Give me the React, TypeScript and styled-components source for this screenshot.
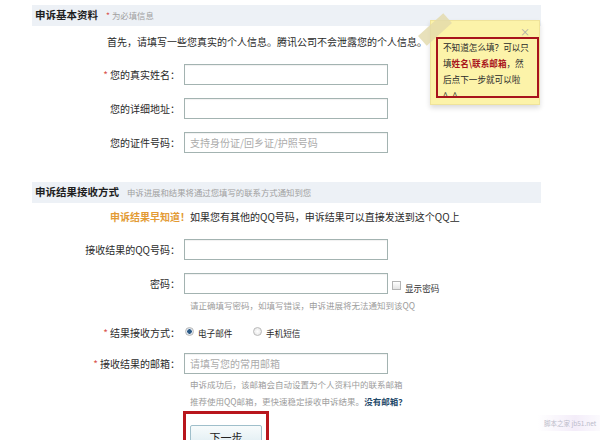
import React from "react";
import styled, { createGlobalStyle } from "styled-components";

const Global = createGlobalStyle`
  html, body { margin: 0; padding: 0; background: #fff; }
  body { font-family: "Noto Sans CJK SC", "Noto Sans", sans-serif; color: #2a2a2a; }
  * { box-sizing: border-box; }
`;

const Page = styled.div`
  position: relative;
  width: 600px;
  height: 440px;
  overflow: hidden;
  padding: 5px 0 0 32px;
`;

const Section = styled.section<{ $mt?: number }>`
  width: 509px;
  margin-top: ${(p) => p.$mt ?? 0}px;
`;

const SectionHeader = styled.div`
  height: 21px;
  background: #edf1f6;
  display: flex;
  align-items: center;
  gap: 8px;
  padding-left: 3px;
`;

const HeaderTitle = styled.h2`
  margin: 0;
  font-size: 10.5px;
  font-weight: 700;
  color: #1e1e1e;
  line-height: 1;
`;

const HeaderNote = styled.span`
  font-size: 8.4px;
  color: #a0a0a0;
  line-height: 1;
`;

const Star = styled.span`
  color: #d9534f;
  margin-right: 2px;
`;

const Intro = styled.p<{ $mt: number; $ml: number }>`
  margin: ${(p) => p.$mt}px 0 0 ${(p) => p.$ml}px;
  font-size: 10px;
  line-height: 16px;
  white-space: nowrap;
`;

const Highlight = styled.strong`
  color: #e39b35;
  font-weight: 700;
`;

const FieldRow = styled.div<{ $mt: number }>`
  display: grid;
  grid-template-columns: 148px 204px auto;
  column-gap: 4px;
  align-items: center;
  margin-top: ${(p) => p.$mt}px;
  height: 21px;
`;

const Label = styled.label`
  text-align: right;
  font-size: 10px;
  line-height: 21px;
  white-space: nowrap;
`;

const TextInput = styled.input`
  width: 204px;
  height: 21px;
  border: 1px solid #a3b3b1;
  box-shadow: inset 0 1px 1px rgba(0, 0, 0, 0.06);
  padding: 0 5px;
  font-family: "Noto Sans CJK SC", "Noto Sans", sans-serif;
  font-size: 10px;
  outline: none;
  &::placeholder { color: #ababab; }
`;

const Hint = styled.div<{ $mt: number; $lh: number }>`
  margin: ${(p) => p.$mt}px 0 0 158px;
  font-size: 8.5px;
  line-height: ${(p) => p.$lh}px;
  color: #9c9c9c;
  white-space: nowrap;
`;

const HintLink = styled.a`
  color: #1f4a6a;
  font-weight: 700;
  text-decoration: none;
`;

const CheckWrap = styled.div`
  display: flex;
  align-items: center;
  gap: 4px;
  margin-top: 9px;
`;

const CheckBox = styled.span`
  width: 9px;
  height: 9px;
  border: 1px solid #b4b4b4;
  background: linear-gradient(#ffffff, #e4e4e4);
  margin-top: -5px;
`;

const SmallText = styled.span`
  font-size: 8.6px;
  color: #333;
`;

const RadioGroup = styled.div`
  display: flex;
  align-items: center;
  padding-left: 1px;
`;

const RadioOption = styled.span<{ $w?: number }>`
  display: flex;
  align-items: center;
  gap: 4px;
  width: ${(p) => (p.$w ? `${p.$w}px` : "auto")};
  font-size: 8.6px;
`;

const RadioDot = styled.span<{ $on?: boolean }>`
  width: 9px;
  height: 9px;
  border-radius: 50%;
  border: 1px solid #b9b9b9;
  background: ${(p) =>
    p.$on
      ? "radial-gradient(circle, #2c5a86 0 2px, #dfe6ee 2.5px)"
      : "radial-gradient(circle, #ffffff, #e2e2e2)"};
  margin-top: -3px;
`;

const ButtonFrame = styled.div`
  margin: 1px 0 0 151px;
  width: 86px;
  height: 40px;
  border: 3px solid #b8161d;
  padding: 9px 4px 0 4px;
`;

const NextButton = styled.button`
  width: 72px;
  height: 24px;
  border: 1px solid #9fbfcb;
  border-radius: 2px;
  background: linear-gradient(#f7fbfc, #dcebf1);
  font-family: "Noto Sans CJK SC", "Noto Sans", sans-serif;
  font-size: 11px;
  color: #222;
  padding: 0;
`;

const Note = styled.aside`
  position: absolute;
  left: 430px;
  top: 20px;
  width: 110px;
  height: 85px;
  background: #fcf3a9;
  border: 1px solid #efe39a;
  box-shadow: 0 3px 5px rgba(0, 0, 0, 0.14);
  padding: 16px 0 0 5px;
`;

const Tape = styled.span`
  position: absolute;
  left: -13px;
  top: 2px;
  width: 34px;
  height: 13px;
  background: rgba(226, 218, 170, 0.8);
  transform: rotate(-42deg);
`;

const Close = styled.span`
  position: absolute;
  right: 9px;
  top: 5px;
  font-size: 10px;
  line-height: 12px;
  color: #a8a8a8;
`;

const NoteBox = styled.div`
  width: 103px;
  height: 61px;
  border: 2px solid #a8141c;
  overflow: hidden;
  padding-left: 5px;
  font-size: 8.6px;
  line-height: 16px;
  color: #2a2a2a;
`;

const NoteStrong = styled.strong`
  color: #a8141c;
  font-weight: 700;
`;

const Watermark = styled.div`
  position: absolute;
  right: 0;
  top: 415px;
  width: 62px;
  height: 16px;
  background: linear-gradient(90deg, rgba(255,255,255,0), rgba(228,212,242,0.55) 60%, rgba(240,235,250,0.3));
  font-size: 6.5px;
  line-height: 16px;
  color: #a6a6b8;
  opacity: 0.75;
  padding-left: 6px;
  white-space: nowrap;
`;

export default function App() {
  return (
    <Page>
      <Global />
      <Section>
        <SectionHeader>
          <HeaderTitle>申诉基本资料</HeaderTitle>
          <HeaderNote>
            <Star>*</Star>为必填信息
          </HeaderNote>
        </SectionHeader>
        <Intro $mt={8} $ml={75}>首先，请填写一些您真实的个人信息。腾讯公司不会泄露您的个人信息。</Intro>
        <FieldRow $mt={14}>
          <Label>
            <Star>*</Star>您的真实姓名：
          </Label>
          <TextInput />
        </FieldRow>
        <FieldRow $mt={13}>
          <Label>您的详细地址：</Label>
          <TextInput />
        </FieldRow>
        <FieldRow $mt={13}>
          <Label>您的证件号码：</Label>
          <TextInput placeholder="支持身份证/回乡证/护照号码" />
        </FieldRow>
      </Section>

      <Section $mt={29}>
        <SectionHeader>
          <HeaderTitle>申诉结果接收方式</HeaderTitle>
          <HeaderNote>申诉进展和结果将通过您填写的联系方式通知到您</HeaderNote>
        </SectionHeader>
        <Intro $mt={6} $ml={78}>
          <Highlight>申诉结果早知道！</Highlight>如果您有其他的QQ号码，申诉结果可以直接发送到这个QQ上
        </Intro>
        <FieldRow $mt={14}>
          <Label>接收结果的QQ号码：</Label>
          <TextInput />
        </FieldRow>
        <FieldRow $mt={13}>
          <Label>密码：</Label>
          <TextInput type="password" />
          <CheckWrap>
            <CheckBox />
            <SmallText>显示密码</SmallText>
          </CheckWrap>
        </FieldRow>
        <Hint $mt={4} $lh={14}>请正确填写密码，如填写错误，申诉进展将无法通知到该QQ</Hint>
        <FieldRow $mt={10}>
          <Label>
            <Star>*</Star>结果接收方式：
          </Label>
          <RadioGroup>
            <RadioOption $w={68}>
              <RadioDot $on />
              电子邮件
            </RadioOption>
            <RadioOption>
              <RadioDot />
              手机短信
            </RadioOption>
          </RadioGroup>
        </FieldRow>
        <FieldRow $mt={10}>
          <Label>
            <Star>*</Star>接收结果的邮箱：
          </Label>
          <TextInput placeholder="请填写您的常用邮箱" />
        </FieldRow>
        <Hint $mt={2} $lh={17}>
          申诉成功后，该邮箱会自动设置为个人资料中的联系邮箱
          <br />
          推荐使用QQ邮箱，更快速稳定接收申诉结果。<HintLink href="#">没有邮箱？</HintLink>
        </Hint>
        <ButtonFrame>
          <NextButton>下一步</NextButton>
        </ButtonFrame>
      </Section>

      <Note>
        <Tape />
        <Close>×</Close>
        <NoteBox>
          不知道怎么填？可以只
          <br />
          填<NoteStrong>姓名\联系邮箱</NoteStrong>，然
          <br />
          后点下一步就可以啦
          <br />
          ^_^
        </NoteBox>
      </Note>

      <Watermark>脚本之家 jb51.net</Watermark>
    </Page>
  );
}
